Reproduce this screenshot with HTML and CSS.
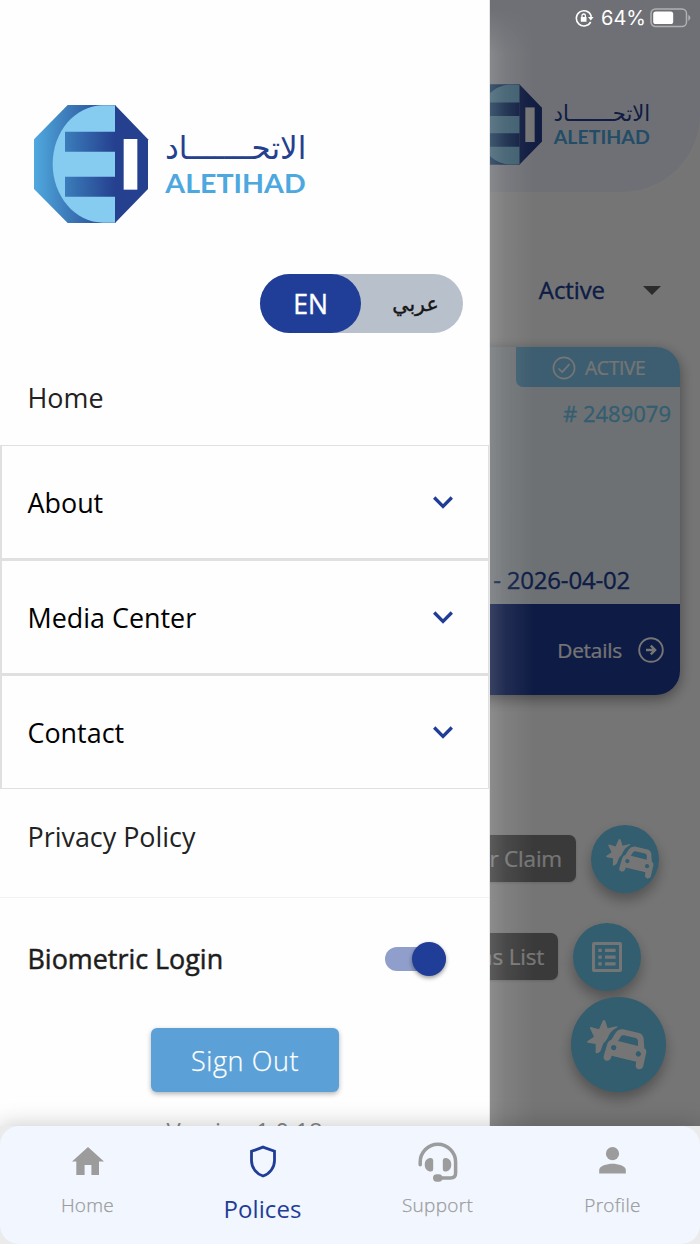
FILE: index.html
```html
<!DOCTYPE html>
<html lang="en">
<head>
<meta charset="utf-8">
<title>Aletihad</title>
<link rel="stylesheet" href="styles.css">
</head>
<body>
<svg class="defs" aria-hidden="true">
  <defs>
    <linearGradient id="face" x1="42" x2="285" y1="0" y2="0" gradientUnits="userSpaceOnUse">
      <stop offset="0" stop-color="#50a9de"/><stop offset=".35" stop-color="#3f82bf"/><stop offset="1" stop-color="#25408f"/>
    </linearGradient>
    <linearGradient id="bar" x1="135" x2="285" y1="0" y2="0" gradientUnits="userSpaceOnUse">
      <stop offset="0" stop-color="#3b7dbb"/><stop offset="1" stop-color="#25408f"/>
    </linearGradient>
    <symbol id="logo" viewBox="42 45 816 354">
      <path fill="url(#face)" d="M143 45H286V399H143L42 297V148Z"/>
      <path fill="#25408f" d="M285 45 384 148V297L285 399Z"/>
      <path fill="#86cbf0" d="M285 46H250C165 46 98 126 98 222S165 398 250 398H285Z"/>
      <path fill="url(#bar)" d="M135 125H286V185H135ZM135 260H286V320H135Z"/>
      <path fill="#fff" d="M311 147H352V299H311Z"/>
      <text class="logo-ar" x="859" y="207" textLength="424" lengthAdjust="spacingAndGlyphs" direction="rtl">الاتحـــــــاد</text>
      <text class="logo-en" x="436" y="308" textLength="421" lengthAdjust="spacingAndGlyphs">ALETIHAD</text>
    </symbol>
    <symbol id="crash" viewBox="322 121 180 150">
      <path fill="#fff" d="M373 121Q376 121 377 125L384 146 411 140Q415 140 413 143 395 153 388 166 380 185 371 191L365 207Q363 218 351 221 348 222 348 218V193L325 189Q320 187 324 184L343 171 331 146Q330 142 334 142L358 149 369 124Q371 121 373 121Z"/>
      <path fill="#fff" fill-rule="evenodd" d="M395 180 408 159Q416 148 430 149L478 160Q491 164 492 178L494 206Q501 209 500 218L490 262Q486 270 477 269 467 266 468 257L470 246 396 228 393 237Q389 244 380 243 370 240 372 230L382 195Q385 183 395 180ZM415 184 475 199V183Q474 177 468 175L433 167Q427 166 424 170ZM402 196a8 8 0 1 0 .1 0ZM476 215a8 8 0 1 0 .1 0Z"/>
    </symbol>
    <symbol id="chevron" viewBox="0 0 20 13"><path fill="none" stroke="#1f3d97" stroke-width="3.3" d="M1.2 1.5 10 10.3 18.8 1.5"/></symbol>
  </defs>
</svg>

<div class="app">
  <main class="page">
    <header class="hero"><svg class="hero-logo"><use href="#logo"/></svg></header>
    <div class="filter"><span>Active</span><i class="caret"></i></div>
    <article class="card">
      <div class="badge">
        <svg width="24" height="24" viewBox="0 0 24 24" fill="none" stroke="#fff" stroke-width="1.7"><circle cx="12" cy="12" r="10.6"/><path d="m6.5 12.5 3.7 3.6 7.3-8"/></svg>
        <span>ACTIVE</span>
      </div>
      <div class="number"># 2489079</div>
      <div class="period">2025-04-03 - 2026-04-02</div>
      <div class="card-foot">
        <span>Details</span>
        <svg width="26" height="26" viewBox="0 0 26 26" fill="none" stroke="#fff" stroke-width="1.9"><circle cx="13" cy="13" r="11.8"/><path stroke-width="2.4" d="M8 13h9M12.8 8.7l4.3 4.3-4.3 4.3"/></svg>
      </div>
    </article>
    <div class="actions">
      <div class="action first"><span class="tip">Motor Claim</span><div class="fab"><svg class="crash"><use href="#crash"/></svg></div></div>
      <div class="action second"><span class="tip">Claims List</span><div class="fab">
        <svg width="32" height="32" viewBox="0 0 32 32" fill="#fff"><path fill-rule="evenodd" d="M3 1H29Q31 1 31 3V29Q31 31 29 31H3Q1 31 1 29V3Q1 1 3 1ZM4 4V28H28V4Z"/><path d="M7.3 7.7h3.4v3.4H7.3zM7.3 14.4h3.4v3.4H7.3zM7.3 21.2h3.4v3.4H7.3zM14 7.7h10.6v3.4H14zM14 14.4h10.6v3.4H14zM14 21.2h10.6v3.4H14z"/></svg>
      </div></div>
      <div class="fab large"><svg class="crash"><use href="#crash"/></svg></div>
    </div>
  </main>
  <div class="scrim"></div>

  <div class="status">
    <svg width="19" height="18" viewBox="0 0 19 18"><path fill="none" stroke="#fff" stroke-width="1.6" d="M15.7 12.8A7.6 7.6 0 1 1 16 6.5V10"/><path fill="#fff" d="M13 8h5.6l-2.8 3.4zM5.8 8h5.7v4.8H5.8z"/><path fill="none" stroke="#fff" stroke-width="1.3" d="M7 8.5V6.7a1.7 1.7 0 0 1 3.4 0v1.8"/></svg>
    <span>64%</span>
    <svg width="42" height="20" viewBox="0 0 42 20"><rect x="1" y="1" width="35.5" height="17.5" rx="4.5" fill="none" stroke="#b0b0b2" stroke-width="1.5"/><rect x="3.2" y="3.4" width="20" height="12.6" rx="2.6" fill="#fff"/><path fill="#b0b0b2" d="M38.3 6.7q4.2 3 0 6.2z"/></svg>
  </div>

  <aside class="drawer">
    <svg class="drawer-logo"><use href="#logo"/></svg>
    <div class="lang"><span class="lang-on">EN</span><span class="lang-off">عربي</span></div>
    <nav class="menu">
      <a class="plain">Home</a>
      <a class="panel"><span>About</span><svg class="chevron"><use href="#chevron"/></svg></a>
      <a class="panel"><span>Media Center</span><svg class="chevron"><use href="#chevron"/></svg></a>
      <a class="panel last"><span>Contact</span><svg class="chevron"><use href="#chevron"/></svg></a>
      <a class="plain privacy">Privacy Policy</a>
    </nav>
    <div class="biometric"><span>Biometric Login</span><div class="switch"><i class="knob"></i></div></div>
    <button class="signout">Sign Out</button>
    <div class="version">Version 1.0.18</div>
  </aside>

  <div class="dock">
    <nav class="tabs">
      <a class="tab"><svg width="32" height="28" viewBox="0 0 32 28"><path fill="#9c9c9c" d="M16 0 32 14.5H27V28H19.4V18H12.6V28H4.3V14.5H0Z"/></svg><span>Home</span></a>
      <a class="tab on"><svg width="28" height="33" viewBox="0 0 28 33"><path fill="none" stroke="#1f3d97" stroke-width="2.8" d="M14 2.1 25.5 6.3V15.5C25.5 22.5 21 28.7 14 31 7 28.7 2.5 22.5 2.5 15.5V6.3Z"/></svg><span>Polices</span></a>
      <a class="tab support"><svg width="40" height="40" viewBox="0 0 40 40"><path fill="none" stroke="#9c9c9c" stroke-width="3.5" stroke-linecap="round" d="M2.2 22.8V20A17.7 17.7 0 0 1 37.6 20V31Q37.6 36 32.5 36H21"/><path fill="#9c9c9c" d="M11.5 16H13Q15.2 16 15.2 18.5V27Q15.2 29.5 13 29.5H11.5Q6.7 28 6.7 22.7T11.5 16ZM28.5 16H27Q24.8 16 24.8 18.5V27Q24.8 29.5 27 29.5H28.5Q33.3 28 33.3 22.7T28.5 16Z"/><rect x="15" y="32.3" width="9.5" height="7.5" rx="3.7" fill="#9c9c9c"/></svg><span>Support</span></a>
      <a class="tab"><svg width="27" height="27" viewBox="0 0 27 27" fill="#9c9c9c"><circle cx="13.5" cy="6.7" r="6.6"/><path d="M.2 26.5V23C.2 18.8 8 16.7 13.5 16.7S26.8 18.8 26.8 23V26.5Z"/></svg><span>Profile</span></a>
    </nav>
  </div>
</div>
</body>
</html>
```
FILE: styles.css
```css
* { box-sizing: border-box; }
body { margin: 0; font-family: "Open Sans", "DejaVu Sans", sans-serif; }
svg { display: block; flex: none; }
.defs { position: absolute; width: 0; height: 0; }
.logo-ar { font: 96px "DejaVu Sans", sans-serif; fill: #25408f; }
.logo-en { font: 700 81px Lato, sans-serif; fill: #4ca8df; }

.app { position: relative; width: 700px; height: 1244px; overflow: hidden; background: #fff; display: flex; flex-direction: column; }

.page { flex: 1; display: flex; flex-direction: column; }
.hero { height: 192px; padding: 84px 50px 0 0; background: #f1f5ff; border-bottom-right-radius: 78px; display: flex; justify-content: flex-end; }
.hero-logo { width: 186px; height: 81px; }
.filter { height: 155px; padding: 41px 39px 0 0; display: flex; justify-content: flex-end; align-items: center; gap: 38px; color: #203e98; font-size: 24px; line-height: 34px; letter-spacing: -.1px; -webkit-text-stroke: .35px; }
.caret { border: 9px solid transparent; border-top-color: #616161; border-bottom: 0; }
.card { width: 660px; height: 348px; margin-left: 20px; border-radius: 24px; background: #edf7fc; box-shadow: 0 4px 14px rgba(0,0,0,.4); overflow: hidden; display: flex; flex-direction: column; align-items: flex-end; }
.badge { width: 164px; height: 40px; padding-left: 36px; background: #85cdf3; border-bottom-left-radius: 7px; display: flex; align-items: center; gap: 9px; color: #fff; font-size: 19.3px; letter-spacing: -.35px; padding-top: 1px; -webkit-text-stroke: .2px; }
.number { margin: 10px 9px 0 0; color: #6fccf3; font-size: 22px; line-height: 32px; -webkit-text-stroke: .3px; }
.period { margin: 134px 50px 0 0; color: #203e98; font-size: 24px; line-height: 34px; letter-spacing: -.2px; -webkit-text-stroke: .35px; }
.card-foot { width: 100%; height: 91px; margin-top: auto; padding-right: 16px; background: #203b94; color: #fff; display: flex; align-items: center; justify-content: flex-end; gap: 16px; font-size: 20.8px; letter-spacing: -.2px; -webkit-text-stroke: .2px; }
.actions { display: flex; flex-direction: column; align-items: flex-end; margin-top: 130px; padding-right: 34px; }
.action { display: flex; align-items: center; gap: 15px; }
.first { margin-right: 7px; }
.second { margin: 30px 25px 6px 0; }
.tip { height: 47px; margin-top: -2px; padding: 0 14px; border-radius: 7px; background: #7e7e7e; color: #fff; font-size: 22.5px; line-height: 47px; letter-spacing: -.2px; -webkit-text-stroke: .2px; box-shadow: 0 1px 3px rgba(0,0,0,.15); }
.fab { width: 68px; height: 68px; border-radius: 50%; background: #6fccf3; display: grid; place-items: center; box-shadow: 0 7px 13px rgba(0,0,0,.3); }
.fab .crash { width: 48px; height: 40px; margin-left: 9px; }
.fab.large { width: 95px; height: 95px; }
.fab.large .crash { width: 60px; height: 50px; margin-left: -3px; }

.scrim { position: absolute; inset: 0; background: rgba(0,0,0,.54); }
.scrim::after { content: ""; position: absolute; left: 490px; top: 8px; width: 45px; bottom: 0; background: linear-gradient(90deg, rgba(255,255,255,.17), rgba(255,255,255,.08) 35%, rgba(255,255,255,0)); mask-image: linear-gradient(transparent, #000 45px); }

.status { position: absolute; top: 8px; right: 8px; display: flex; align-items: center; gap: 4px; color: #fff; font: 20px/20px Inter, sans-serif; }
.status span { margin-left: 3px; }

.drawer { position: absolute; left: 0; top: 0; width: 490px; height: 1244px; background: #fefefe; border-right: 1px solid #e6e6e6; display: flex; flex-direction: column; }
.drawer-logo { width: 272px; height: 118px; margin: 105px 0 0 34px; }
.lang { width: 203px; height: 59px; margin: 51px 0 0 260px; border-radius: 30px; background: #b8c0cc; display: flex; font-size: 26.5px; line-height: 61px; text-align: center; }
.lang-on { width: 101px; height: 59px; border-radius: 30px; background: #203e98; color: #fff; -webkit-text-stroke: .4px; }
.lang-off { width: 102px; padding-left: 7px; color: #171717; font-family: "DejaVu Sans", sans-serif; font-size: 20.5px; -webkit-text-stroke: .4px; }
.menu { display: flex; flex-direction: column; font-size: 26.9px; line-height: 36px; color: #000; }
.plain { height: 112px; padding: 47px 27.5px 0; color: #222; }
.panel { height: 115px; padding: 1px 35px 0 25.5px; border: solid #e0e0e0; border-width: 1px 1px 2px 2px; display: flex; align-items: center; justify-content: space-between; }
.panel.last { height: 114px; border-bottom-width: 1px; }
.chevron { width: 20px; height: 13px; }
.privacy { height: 109px; padding-top: 30px; border-bottom: 1px solid #f2f2f2; }
.biometric { height: 121px; padding: 0 43px 0 27.5px; display: flex; align-items: center; justify-content: space-between; font-size: 26.9px; color: #1d1d1d; -webkit-text-stroke: .5px; }
.switch { width: 61px; height: 24px; border-radius: 12px; background: #8f9ecb; display: flex; justify-content: flex-end; align-items: center; }
.knob { width: 34px; height: 34px; flex: none; border-radius: 50%; background: #203e98; box-shadow: 0 2px 4px rgba(0,0,0,.4); }
.signout { width: 188px; height: 64px; margin: 9px 0 0 151px; padding: 0; border: 0; border-radius: 6px; background: #5ba1d8; color: #fff; font: 300 27px "Open Sans", sans-serif; letter-spacing: .6px; -webkit-text-stroke: .25px; box-shadow: 0 2px 5px rgba(0,0,0,.3); }
.version { margin: 21px 0 0; text-align: center; font-size: 23.7px; line-height: 36px; color: #888; }

.dock { position: relative; flex: none; height: 118px; background: #ebebeb; box-shadow: 0 0 22px rgba(0,0,0,.22); }
.tabs { height: 118px; border-radius: 19px; background: #f1f6ff; display: grid; grid-template-columns: repeat(4, 1fr); }
.tab { height: 118px; padding-top: 21px; display: flex; flex-direction: column; align-items: center; color: #9c9c9c; font-size: 19px; font-weight: 300; line-height: 26px; letter-spacing: .3px; -webkit-text-stroke: .25px; }
.tab span { margin-top: auto; margin-bottom: 26px; }
.tab.on { padding-top: 19px; color: #1f3d97; font-size: 24px; font-weight: 400; letter-spacing: .1px; -webkit-text-stroke: 0; }
.tab.on span { margin-bottom: 22px; }
.tab.support { padding-top: 16px; }
```
